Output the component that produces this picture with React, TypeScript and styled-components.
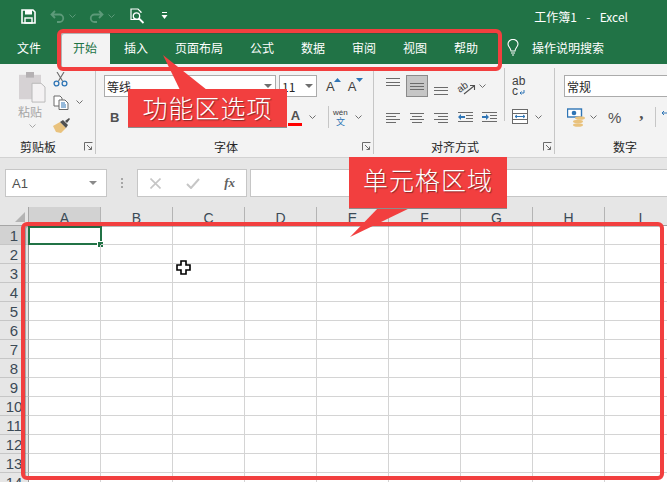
import React from "react";
import styled, { createGlobalStyle } from "styled-components";

const Global = createGlobalStyle`
  html, body {
    margin: 0;
    padding: 0;
    background: #ffffff;
  }
  body {
    font-family: "Noto Sans CJK SC", "Liberation Sans", sans-serif;
    font-size: 12px;
    color: #262626;
  }
`;

const Page = styled.div`
  position: relative;
  width: 667px;
  height: 482px;
  overflow: hidden;
  display: flex;
  flex-direction: column;
`;

/* title bar */
const TitleBar = styled.div`
  height: 32px;
  flex: none;
  background: #217346;
  display: flex;
  align-items: center;
  padding: 0 39px 0 21px;
  color: #ffffff;
`;

const QuickIcons = styled.div`
  display: flex;
  align-items: center;
`;

const Icon = styled.svg<{ $gap?: number }>`
  display: block;
  flex: none;
  margin-left: ${(p) => p.$gap ?? 0}px;
`;

const WindowTitle = styled.div`
  margin-left: auto;
  font-size: 12px;
  white-space: pre;
  word-spacing: 2px;
`;

/* tabs */
const TabBar = styled.div`
  height: 32px;
  flex: none;
  background: #217346;
  display: flex;
  gap: 1px;
  padding-left: 4px;
`;

const Tab = styled.div<{ $active?: boolean; $width: number; $inset?: number }>`
  width: ${(p) => p.$width}px;
  box-sizing: border-box;
  display: flex;
  align-items: center;
  justify-content: center;
  padding: 0 ${(p) => p.$inset ?? 0}px 1px 0;
  background: ${(p) => (p.$active ? "#f3f3f3" : "transparent")};
  color: ${(p) => (p.$active ? "#217346" : "#ffffff")};
`;

const SearchHint = styled.div`
  display: flex;
  align-items: center;
  margin-left: 15px;
  padding-bottom: 1px;
  gap: 13px;
  color: #ffffff;
`;

/* ribbon */
const Ribbon = styled.div`
  height: 94px;
  flex: none;
  box-sizing: border-box;
  background: #f3f3f3;
  border-bottom: 1px solid #d2d2d2;
  display: flex;
  padding: 4px 0 3px;
  overflow: hidden;
`;

const Group = styled.div<{ $width: number; $last?: boolean }>`
  width: ${(p) => p.$width}px;
  flex: none;
  box-sizing: border-box;
  border-right: ${(p) => (p.$last ? "none" : "1px solid #c6c6c6")};
  display: flex;
  flex-direction: column;
`;

const GroupBody = styled.div`
  flex: 1;
  min-height: 0;
  display: flex;
`;

const GroupLabel = styled.div<{ $shift?: number }>`
  height: 16px;
  flex: none;
  position: relative;
  display: flex;
  align-items: center;
  justify-content: center;
  padding-right: ${(p) => p.$shift ?? 0}px;
  color: #262626;
`;

const Launcher = styled.svg`
  position: absolute;
  right: 2px;
  top: 4px;
`;

const PasteColumn = styled.div`
  width: 50px;
  padding: 4px 0 0 14px;
  box-sizing: border-box;
  display: flex;
  flex-direction: column;
  align-items: center;
  color: #a6a6a6;
`;

const PasteText = styled.div`
  margin: 0 4px 3px 0;
  line-height: 18px;
`;

const ClipColumn = styled.div`
  display: flex;
  flex-direction: column;
  gap: 9px;
  padding: 4px 0 0 3px;
`;

const ClipRow = styled.div`
  display: flex;
  align-items: center;
  height: 14px;
`;

const RowStack = styled.div<{ $left: number }>`
  display: flex;
  flex-direction: column;
  gap: 8px;
  padding: 7px 0 0 ${(p) => p.$left}px;
`;

const Row = styled.div<{ $height?: number }>`
  display: flex;
  align-items: center;
  height: ${(p) => p.$height ?? 22}px;
`;

const SelectBox = styled.div<{ $width: number; $gap?: number }>`
  width: ${(p) => p.$width}px;
  height: 22px;
  flex: none;
  box-sizing: border-box;
  margin-left: ${(p) => p.$gap ?? 0}px;
  background: #ffffff;
  border: 1px solid #ababab;
  display: flex;
  align-items: center;
  justify-content: space-between;
  padding: 0 3px 0 2px;
  color: #262626;
`;

const BoldLetter = styled.span`
  margin-left: 6px;
  font-family: "Liberation Sans", sans-serif;
  font-size: 13px;
  font-weight: 700;
  color: #505050;
`;

const GrowA = styled.div<{ $left: number }>`
  margin-left: ${(p) => p.$left}px;
  position: relative;
  font-family: "Liberation Sans", sans-serif;
  font-size: 13px;
  color: #404040;
  line-height: 14px;
  padding-top: 2px;
`;

const GrowMark = styled.svg`
  position: absolute;
  left: 8px;
  top: 0;
`;

const ColorBar = styled.div`
  width: 14px;
  text-align: center;
  font-family: "Liberation Sans", sans-serif;
  font-weight: 700;
  font-size: 13px;
  line-height: 14px;
  color: #505050;
  border-bottom: 3px solid #ff0000;
  margin-left: 169px;
`;

const Wen = styled.div`
  display: flex;
  flex-direction: column;
  align-items: center;
  width: 18px;
  line-height: 9px;
`;

const WenTop = styled.span`
  font-family: "Liberation Sans", sans-serif;
  font-size: 8px;
  color: #404040;
`;

const WenBottom = styled.span`
  font-size: 9px;
  color: #2f75b5;
  line-height: 10px;
`;

const Separator = styled.div<{ $left: number; $height: number; $right?: number }>`
  width: 1px;
  flex: none;
  height: ${(p) => p.$height}px;
  background: #c6c6c6;
  margin-left: ${(p) => p.$left}px;
  margin-right: ${(p) => p.$right ?? 0}px;
`;

const AlignGrid = styled.div`
  display: grid;
  grid-template-columns: repeat(5, 24px);
  grid-auto-rows: 22px;
  row-gap: 9px;
  padding: 7px 0 0 7px;
`;

const AlignCell = styled.div<{ $selected?: boolean; $span?: number }>`
  display: flex;
  align-items: center;
  justify-content: ${(p) => (p.$span ? "flex-start" : "center")};
  box-sizing: border-box;
  grid-column: span ${(p) => p.$span ?? 1};
  background: ${(p) => (p.$selected ? "#c6c6c6" : "transparent")};
  border: ${(p) => (p.$selected ? "1px solid #8a8a8a" : "none")};
  margin: ${(p) => (p.$selected ? "0 1px" : "0")};
`;

const AlignSide = styled.div`
  display: flex;
  flex-direction: column;
  gap: 9px;
  padding: 7px 0 0 7px;
`;

const SideRow = styled.div`
  display: flex;
  align-items: center;
  height: 22px;
`;

const Wrap = styled.div`
  font-family: "Liberation Sans", sans-serif;
  font-size: 12px;
  line-height: 10px;
  color: #404040;
`;

const WrapLine = styled.div`
  display: flex;
  align-items: flex-end;
  gap: 1px;
`;

const NumberRow = styled.div`
  display: flex;
  align-items: center;
  height: 24px;
  padding-left: 3px;
`;

const Percent = styled.span`
  font-family: "Liberation Sans", sans-serif;
  font-size: 15px;
  color: #505050;
  margin-left: 11px;
`;

const Comma = styled.span`
  font-family: "Liberation Serif", serif;
  font-weight: 700;
  font-size: 17px;
  color: #505050;
  margin: -6px 0 0 18px;
`;

/* formula bar */
const FormulaBar = styled.div`
  height: 49px;
  flex: none;
  box-sizing: border-box;
  background: #e6e6e6;
  display: flex;
  align-items: flex-start;
  padding: 11px 0 0 5px;
`;

const NameBox = styled.div`
  width: 102px;
  height: 28px;
  box-sizing: border-box;
  background: #ffffff;
  border: 1px solid #c6c6c6;
  display: flex;
  align-items: center;
  justify-content: space-between;
  padding: 0 9px 0 6px;
  font-family: "Liberation Sans", sans-serif;
  font-size: 13px;
  color: #505050;
`;

const Dots = styled.div`
  width: 2px;
  height: 10px;
  margin: 9px 14px 0 14px;
  background: repeating-linear-gradient(#a6a6a6 0 2px, transparent 2px 4px);
`;

const FormulaButtons = styled.div`
  width: 110px;
  height: 28px;
  box-sizing: border-box;
  background: #ffffff;
  border: 1px solid #c6c6c6;
  display: flex;
  align-items: center;
  justify-content: space-between;
  padding: 0 11px 0 12px;
`;

const FxLabel = styled.span`
  font-family: "Liberation Serif", serif;
  font-style: italic;
  font-weight: 700;
  font-size: 13px;
  color: #606060;
`;

const FormulaInput = styled.div`
  flex: 1;
  height: 28px;
  box-sizing: border-box;
  margin-left: 3px;
  background: #ffffff;
  border: 1px solid #c6c6c6;
  border-right: none;
`;

/* sheet */
const Sheet = styled.div`
  flex: 1;
  display: grid;
  grid-template-columns: 29px repeat(9, 72px);
  grid-auto-rows: 19px;
  background: #ffffff;
  overflow: hidden;
`;

const Corner = styled.div`
  background: #e6e6e6;
  border-right: 1px solid #a6a6a6;
  border-bottom: 1px solid #a6a6a6;
  box-sizing: border-box;
  display: flex;
  align-items: flex-end;
  justify-content: flex-end;
  padding: 0 3px 3px 0;
`;

const HeaderCell = styled.div<{ $active?: boolean; $row?: boolean }>`
  box-sizing: border-box;
  background: ${(p) => (p.$active ? "#d2d2d2" : "#e6e6e6")};
  border-right: 1px solid ${(p) => (p.$row ? "#9e9e9e" : "#b4b4b4")};
  border-bottom: 1px solid ${(p) => (p.$row ? "#c6c6c6" : "#9e9e9e")};
  display: flex;
  align-items: center;
  justify-content: center;
  padding-top: ${(p) => (p.$row ? 1 : 4)}px;
  font-family: "Liberation Sans", sans-serif;
  font-size: ${(p) => (p.$row ? 15 : 14)}px;
  color: #3b4a56;
`;

const Cell = styled.div<{ $selected?: boolean }>`
  box-sizing: border-box;
  position: relative;
  border-right: 1px solid #d4d4d4;
  border-bottom: 1px solid #d4d4d4;

  ${(p) =>
    p.$selected &&
    `
    &::before {
      content: "";
      position: absolute;
      left: -1px;
      top: 0;
      right: -2px;
      bottom: -1px;
      border: 2px solid #217346;
    }
    &::after {
      content: "";
      position: absolute;
      right: -3px;
      bottom: -3px;
      width: 5px;
      height: 5px;
      background: #217346;
      outline: 1px solid #ffffff;
    }
  `}
`;

/* annotations painted on top of the screenshot */
const RedFrame = styled.div<{ $left: number; $top: number; $width: number; $height: number }>`
  position: absolute;
  left: ${(p) => p.$left}px;
  top: ${(p) => p.$top}px;
  width: ${(p) => p.$width}px;
  height: ${(p) => p.$height}px;
  box-sizing: border-box;
  border: 4px solid #f23f3f;
  border-radius: 6px;
  box-shadow: inset 1px 1px 0 rgba(60, 60, 60, 0.35);
`;

const CalloutBox = styled.div<{ $left: number; $top: number; $width: number; $height: number; $lift?: number }>`
  position: absolute;
  left: ${(p) => p.$left}px;
  top: ${(p) => p.$top}px;
  width: ${(p) => p.$width}px;
  height: ${(p) => p.$height}px;
  box-sizing: border-box;
  padding-bottom: ${(p) => p.$lift ?? 0}px;
  background: #f23f3f;
  box-shadow: 0 1px 0 #8c8c8c;
  display: flex;
  align-items: center;
  justify-content: center;
  color: #ffffff;
  font-size: 25px;
  font-weight: 300;
  letter-spacing: 1px;
  text-shadow: 1px 1px 1px rgba(90, 30, 30, 0.7);
`;

const Tail = styled.svg`
  position: absolute;
  left: 0;
  top: 0;
  pointer-events: none;
`;

const CursorMark = styled.svg`
  position: absolute;
  left: 176px;
  top: 260px;
`;

const Chevron = ({ gap = 0, color = "#6f6f6f" }: { gap?: number; color?: string }) => (
  <Icon $gap={gap} width="7" height="4" viewBox="0 0 7 4">
    <path d="M0.5 0.5 L3.5 3.5 L6.5 0.5" fill="none" stroke={color} strokeWidth="1" />
  </Icon>
);

const Triangle = ({ color = "#6f6f6f" }: { color?: string }) => (
  <Icon width="8" height="4" viewBox="0 0 8 4">
    <path d="M0 0 H8 L4 4 Z" fill={color} />
  </Icon>
);

const LauncherIcon = () => (
  <Launcher width="9" height="9" viewBox="0 0 9 9">
    <path d="M0.5 8.5 V0.5 H8.5 M3 3 L7.5 7.5 M7.5 4.5 V7.5 H4.5" fill="none" stroke="#6a6a6a" strokeWidth="1" />
  </Launcher>
);

// rows of grey lines: [x, width, y] in a 16 box
const Lines = ({ rows }: { rows: number[][] }) => (
  <Icon width="16" height="17" viewBox="0 0 16 17">
    {rows.map(([x, w, y], i) => (
      <rect key={i} x={x} y={y} width={w} height="1" fill="#6b6b6b" />
    ))}
  </Icon>
);

const Indent = ({ right }: { right?: boolean }) => (
  <Icon width="17" height="16" viewBox="0 0 17 16">
    <rect x="1" y="3" width="15" height="1" fill="#6b6b6b" />
    <rect x="9" y="6" width="7" height="1" fill="#6b6b6b" />
    <rect x="9" y="9" width="7" height="1" fill="#6b6b6b" />
    <rect x="1" y="12" width="15" height="1" fill="#6b6b6b" />
    <path
      d={right ? "M1 7 H5 V5 L8 8 L5 11 V9 H1 Z" : "M8 7 H4 V5 L1 8 L4 11 V9 H8 Z"}
      fill="#2f75b5"
    />
  </Icon>
);

const tabs = [
  { name: "文件", width: 55, inset: 5 },
  { name: "开始", width: 50, active: true },
  { name: "插入", width: 50 },
  { name: "页面布局", width: 74 },
  { name: "公式", width: 50 },
  { name: "数据", width: 50 },
  { name: "审阅", width: 50 },
  { name: "视图", width: 50 },
  { name: "帮助", width: 50 },
];

const columns = ["A", "B", "C", "D", "E", "F", "G", "H", "I"];
const rows = Array.from({ length: 14 }, (_, i) => i + 1);

export default function App() {
  return (
    <Page>
      <Global />
      <TitleBar>
        <QuickIcons>
          <Icon width="15" height="15" viewBox="0 0 15 15">
            <path d="M1 1 H12 L14 3 V14 H1 Z" fill="none" stroke="#fff" strokeWidth="1.6" />
            <rect x="4" y="1" width="7" height="4.5" fill="#fff" />
            <rect x="4" y="9" width="7" height="5" fill="none" stroke="#fff" strokeWidth="1.4" />
          </Icon>
          <Icon $gap={14} width="15" height="13" viewBox="0 0 15 13">
            <path d="M5 1 L1.5 4.5 L5 8 M2 4.5 H9.5 A3.7 3.7 0 0 1 9.5 12 H7" fill="none" stroke="#5c9a79" strokeWidth="1.8" />
          </Icon>
          <Chevron gap={4} color="#5c9a79" />
          <Icon $gap={13} width="15" height="13" viewBox="0 0 15 13">
            <path d="M10 1 L13.5 4.5 L10 8 M13 4.5 H5.5 A3.7 3.7 0 0 0 5.5 12 H8" fill="none" stroke="#5c9a79" strokeWidth="1.8" />
          </Icon>
          <Chevron gap={4} color="#5c9a79" />
          <Icon $gap={15} width="15" height="17" viewBox="0 0 15 17">
            <path d="M9 11.5 H1 V1 H8 L11 4 V5" fill="none" stroke="#fff" strokeWidth="1.2" />
            <circle cx="6.5" cy="8" r="3.2" fill="none" stroke="#fff" strokeWidth="1.3" />
            <path d="M9 10.5 L13.5 15" stroke="#fff" strokeWidth="1.8" />
          </Icon>
          <Icon $gap={16} width="7" height="8" viewBox="0 0 7 8">
            <rect x="1" y="0" width="5" height="1" fill="#fff" />
            <path d="M0.5 3 H6.5 L3.5 7 Z" fill="#fff" />
          </Icon>
        </QuickIcons>
        <WindowTitle>工作簿1  -  Excel</WindowTitle>
      </TitleBar>

      <TabBar>
        {tabs.map((t) => (
          <Tab key={t.name} $active={t.active} $width={t.width} $inset={t.inset}>
            {t.name}
          </Tab>
        ))}
        <SearchHint>
          <Icon width="12" height="17" viewBox="0 0 12 17">
            <path d="M4 12 C4 9 1 8 1 5 A5 4.6 0 0 1 11 5 C11 8 8 9 8 12 Z" fill="none" stroke="#fff" strokeWidth="1.1" />
            <path d="M4 14 H8 M5 16 H7" stroke="#fff" strokeWidth="1" />
          </Icon>
          操作说明搜索
        </SearchHint>
      </TabBar>

      <Ribbon>
        <Group $width={96}>
          <GroupBody>
            <PasteColumn>
              <Icon width="28" height="31" viewBox="0 0 28 33" preserveAspectRatio="none">
                <rect x="1" y="3" width="22" height="26" fill="#d6d2d4" />
                <rect x="8" y="0" width="8" height="6" fill="#b5b1b3" />
                <path d="M14 12 H23 L27 16 V32 H14 Z" fill="#f4f2f3" stroke="#b8b8b8" />
              </Icon>
              <PasteText>粘贴</PasteText>
              <Chevron color="#a6a6a6" />
            </PasteColumn>
            <ClipColumn>
              <ClipRow>
                <Icon width="15" height="15" viewBox="0 0 15 15">
                  <path d="M4 0 L9.5 9 M11 0 L5.5 9" stroke="#6a6a6a" strokeWidth="1.1" fill="none" />
                  <circle cx="3.5" cy="11.5" r="2.4" fill="none" stroke="#2f75b5" strokeWidth="1.3" />
                  <circle cx="11.5" cy="11.5" r="2.4" fill="none" stroke="#2f75b5" strokeWidth="1.3" />
                </Icon>
              </ClipRow>
              <ClipRow>
                <Icon width="16" height="15" viewBox="0 0 16 15">
                  <path d="M1 1 H7 L9 3 V11 H1 Z" fill="#fff" stroke="#6a6a6a" />
                  <path d="M6 5 H12 L15 8 V14.5 H6 Z" fill="#fff" stroke="#6a6a6a" />
                  <path d="M8 8 H12 M8 10 H13 M8 12 H13" stroke="#2f75b5" />
                </Icon>
                <Chevron gap={7} />
              </ClipRow>
              <ClipRow>
                <Icon width="18" height="15" viewBox="0 0 18 15">
                  <path d="M0 8 L7 4 L13 10 L8 15 L3 14 Z" fill="#e9c27d" />
                  <path d="M7 4 L13 10 L15 7 L10 2 Z" fill="#505050" />
                  <path d="M12 3 L16 0 L17 1 L14 5 Z" fill="#505050" />
                </Icon>
              </ClipRow>
            </ClipColumn>
          </GroupBody>
          <GroupLabel $shift={19}>
            剪贴板
            <LauncherIcon />
          </GroupLabel>
        </Group>

        <Group $width={278}>
          <GroupBody>
            <RowStack $left={8}>
              <Row>
                <SelectBox $width={172}>
                  等线
                  <Triangle />
                </SelectBox>
                <SelectBox $width={38} $gap={3}>
                  11
                  <Triangle />
                </SelectBox>
                <GrowA $left={9}>
                  A
                  <GrowMark width="7" height="4" viewBox="0 0 7 4">
                    <path d="M0 4 L3.5 0 L7 4 Z" fill="#2f75b5" />
                  </GrowMark>
                </GrowA>
                <GrowA $left={13}>
                  A
                  <GrowMark width="7" height="4" viewBox="0 0 7 4">
                    <path d="M0 0 H7 L3.5 4 Z" fill="#2f75b5" />
                  </GrowMark>
                </GrowA>
              </Row>
              <Row $height={24}>
                <BoldLetter>B</BoldLetter>
                <ColorBar>A</ColorBar>
                <Chevron gap={7} />
                <Separator $left={12} $height={22} $right={2} />
                <Wen>
                  <WenTop>wén</WenTop>
                  <WenBottom>文</WenBottom>
                </Wen>
                <Chevron gap={6} />
              </Row>
            </RowStack>
          </GroupBody>
          <GroupLabel $shift={17}>
            字体
            <LauncherIcon />
          </GroupLabel>
        </Group>

        <Group $width={181}>
          <GroupBody>
            <AlignGrid>
              <AlignCell>
                <Lines rows={[[1, 14, 0], [1, 14, 4], [1, 14, 7]]} />
              </AlignCell>
              <AlignCell $selected>
                <Lines rows={[[1, 14, 5], [1, 14, 8], [1, 14, 11]]} />
              </AlignCell>
              <AlignCell>
                <Lines rows={[[1, 14, 9], [1, 14, 12], [1, 14, 16]]} />
              </AlignCell>
              <AlignCell $span={2}>
                <Icon $gap={4} width="19" height="17" viewBox="0 0 19 17">
                  <text x="0" y="12" fontSize="10" fontFamily="Liberation Sans" fill="#404040" transform="rotate(-35 6 9)">ab</text>
                  <path d="M7 16 L17 8 M13 7.5 H17.5 V12" fill="none" stroke="#505050" strokeWidth="1.1" />
                </Icon>
                <Chevron gap={3} />
              </AlignCell>
              <AlignCell>
                <Lines rows={[[1, 14, 4], [1, 10, 7], [1, 14, 10], [1, 10, 13]]} />
              </AlignCell>
              <AlignCell>
                <Lines rows={[[1, 14, 4], [3, 10, 7], [1, 14, 10], [3, 10, 13]]} />
              </AlignCell>
              <AlignCell>
                <Lines rows={[[1, 14, 4], [5, 10, 7], [1, 14, 10], [5, 10, 13]]} />
              </AlignCell>
              <AlignCell>
                <Indent />
              </AlignCell>
              <AlignCell>
                <Indent right />
              </AlignCell>
            </AlignGrid>
            <Separator $left={3} $height={53} />
            <AlignSide>
              <SideRow>
                <Wrap>
                  ab
                  <WrapLine>
                    c
                    <Icon width="6" height="6" viewBox="0 0 6 6">
                      <path d="M5 0 V3 H1 M2.5 1.5 L1 3 L2.5 4.5" fill="none" stroke="#2f75b5" />
                    </Icon>
                  </WrapLine>
                </Wrap>
              </SideRow>
              <SideRow>
                <Icon width="16" height="16" viewBox="0 0 16 16">
                  <rect x="0.5" y="0.5" width="15" height="14" fill="#fff" stroke="#6a6a6a" />
                  <path d="M0.5 4.5 H15.5 M0.5 10.5 H15.5" stroke="#6a6a6a" />
                  <path d="M3 7.5 H13 M5 6 L3 7.5 L5 9 M11 6 L13 7.5 L11 9" fill="none" stroke="#2f75b5" />
                </Icon>
                <Chevron gap={7} />
              </SideRow>
            </AlignSide>
          </GroupBody>
          <GroupLabel $shift={18}>
            对齐方式
            <LauncherIcon />
          </GroupLabel>
        </Group>

        <Group $width={140} $last>
          <GroupBody>
            <RowStack $left={9}>
              <Row>
                <SelectBox $width={120}>常规</SelectBox>
              </Row>
              <NumberRow>
                <Icon width="20" height="19" viewBox="0 0 20 19">
                  <rect x="0.5" y="1" width="14" height="8" fill="#fff" stroke="#2f75b5" strokeWidth="1.4" />
                  <circle cx="7" cy="5" r="2.3" fill="#2f75b5" />
                  <ellipse cx="13" cy="10" rx="5" ry="1.8" fill="#e9c27d" />
                  <ellipse cx="11" cy="13.5" rx="5" ry="1.8" fill="#e9c27d" />
                  <ellipse cx="11" cy="17" rx="5" ry="1.8" fill="#e9c27d" />
                </Icon>
                <Chevron gap={3} />
                <Percent>%</Percent>
                <Comma>,</Comma>
                <Separator $left={11} $height={20} $right={4} />
                <Icon width="12" height="14" viewBox="0 0 12 14">
                  <path d="M7 3 H2 M4 1 L2 3 L4 5" fill="none" stroke="#2f75b5" />
                </Icon>
              </NumberRow>
            </RowStack>
          </GroupBody>
          <GroupLabel>数字</GroupLabel>
        </Group>
      </Ribbon>

      <FormulaBar>
        <NameBox>
          A1
          <Triangle color="#8a8a8a" />
        </NameBox>
        <Dots />
        <FormulaButtons>
          <Icon width="11" height="11" viewBox="0 0 11 11">
            <path d="M0.5 0.5 L10.5 10.5 M10.5 0.5 L0.5 10.5" stroke="#c6c6c6" strokeWidth="1.6" />
          </Icon>
          <Icon width="14" height="11" viewBox="0 0 14 11">
            <path d="M1 6 L5 10 L13 1" fill="none" stroke="#c6c6c6" strokeWidth="2" />
          </Icon>
          <FxLabel>fx</FxLabel>
        </FormulaButtons>
        <FormulaInput />
      </FormulaBar>

      <Sheet>
        <Corner>
          <Icon width="10" height="10" viewBox="0 0 10 10">
            <path d="M10 0 V10 H0 Z" fill="#b4b4b4" />
          </Icon>
        </Corner>
        {columns.map((c, i) => (
          <HeaderCell key={c} $active={i === 0}>
            {c}
          </HeaderCell>
        ))}
        {rows.map((r) => (
          <React.Fragment key={r}>
            <HeaderCell $row $active={r === 1}>
              {r}
            </HeaderCell>
            {columns.map((c, i) => (
              <Cell key={c} $selected={r === 1 && i === 0} />
            ))}
          </React.Fragment>
        ))}
      </Sheet>

      <CursorMark width="15" height="15" viewBox="0 0 15 15">
        <path d="M5 1 H10 V5 H14 V10 H10 V14 H5 V10 H1 V5 H5 Z" fill="#fff" stroke="#000" strokeWidth="1.6" />
      </CursorMark>

      <RedFrame $left={57} $top={29} $width={445} $height={42} />
      <RedFrame $left={21} $top={222} $width={643} $height={258} />

      <Tail width="667" height="482" viewBox="0 0 667 482">
        <path d="M163 55 L180 90 H207 Z" fill="#f23f3f" />
        <path d="M350 237 L379 207 H412 Z" fill="#f23f3f" />
      </Tail>
      <CalloutBox $left={128} $top={89} $width={159} $height={38} $lift={2}>
        功能区选项
      </CalloutBox>
      <CalloutBox $left={349} $top={157} $width={158} $height={51} $lift={8}>
        单元格区域
      </CalloutBox>
    </Page>
  );
}
